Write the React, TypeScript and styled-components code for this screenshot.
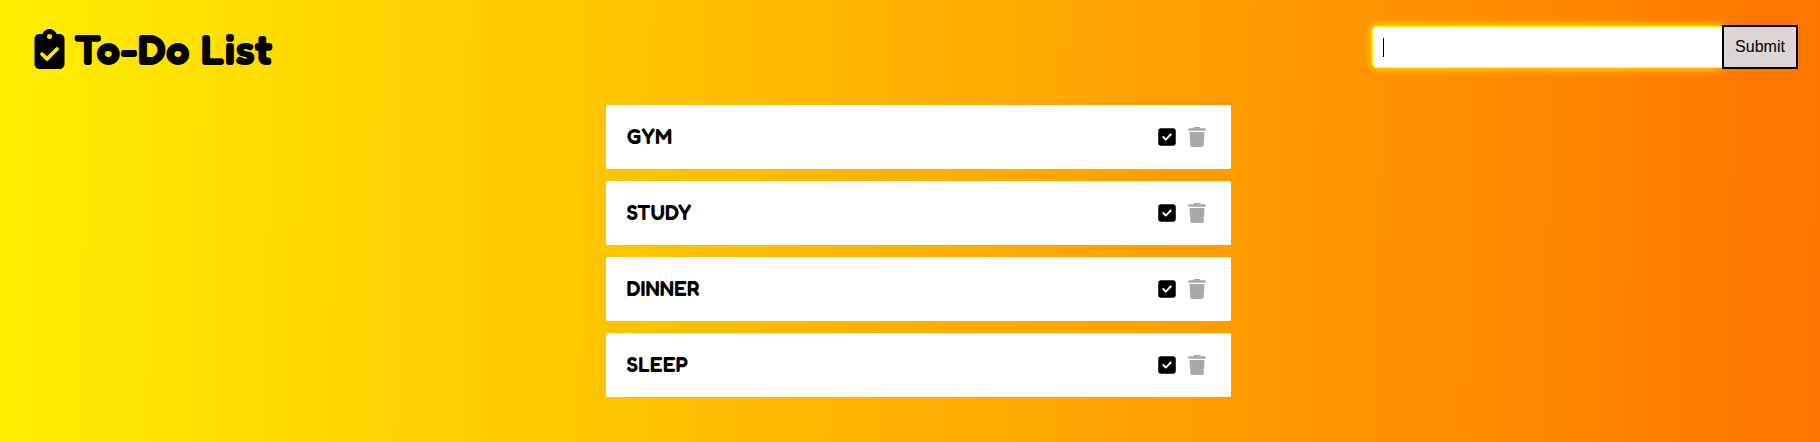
import React, { useState } from "react";
import styled, { createGlobalStyle } from "styled-components";
import { FaClipboardCheck, FaSquareCheck, FaTrash } from "react-icons/fa6";

const GlobalStyle = createGlobalStyle`
  * {
    box-sizing: border-box;
  }
  body {
    margin: 0;
    min-height: 100vh;
    background: linear-gradient(91deg, #ffee00, #ff7500);
    color: #000;
    font-family: "Fredoka One", Fredoka, Lato, "Liberation Sans", sans-serif;
  }
`;

const Header = styled.header`
  display: flex;
  align-items: flex-start;
  justify-content: space-between;
  padding: 25px 22px 28px 34px;
`;

const Title = styled.h1`
  display: flex;
  align-items: center;
  gap: 9px;
  margin: 0;
  font-size: 43px;
  line-height: 48px;
  font-weight: 900;

  svg {
    width: 31px;
    height: 40px;
  }
`;

const Form = styled.form`
  display: flex;
  align-items: center;
`;

const InputWrap = styled.div`
  position: relative;
  display: flex;
`;

const TaskInput = styled.input`
  width: 350px;
  height: 42px;
  padding: 0 10px;
  border: 1px solid #ffff00;
  border-right-width: 0;
  border-radius: 5px 0 0 5px;
  outline: none;
  background: #fff;
  box-shadow: 0 0 8px #ffff00;
  caret-color: transparent;
  font: 16px "Liberation Sans", Arial, sans-serif;
`;

const Caret = styled.span`
  position: absolute;
  top: 12px;
  left: 11px;
  width: 1px;
  height: 19px;
  background: #000;
  pointer-events: none;
`;

const SubmitButton = styled.button`
  position: relative;
  width: 76px;
  height: 44px;
  padding: 0;
  border: 2px solid #000;
  background: #dcd5d5;
  color: #000;
  font: 16px "Liberation Sans", Arial, sans-serif;
`;

const Main = styled.main`
  padding-left: 16px;
`;

const TaskList = styled.ul`
  display: flex;
  flex-direction: column;
  gap: 12px;
  width: 625px;
  max-width: 100%;
  margin: 4px auto 0;
  padding: 0;
  list-style: none;
`;

const Task = styled.li`
  display: flex;
  align-items: center;
  height: 64px;
  padding: 0 25px 0 21px;
  border-radius: 2px;
  background: #fff;
`;

const TaskName = styled.span`
  flex: 1;
  font-size: 21px;
  line-height: 24px;
  font-weight: 600;
`;

const IconButton = styled.button<{ $color: string }>`
  display: flex;
  margin-left: 12px;
  padding: 0;
  border: 0;
  background: none;
  color: ${({ $color }) => $color};

  svg {
    width: 18px;
    height: 20px;
  }
`;

const tasks = ["GYM", "STUDY", "DINNER", "SLEEP"];

export default function App() {
  const [value, setValue] = useState("");

  return (
    <>
      <GlobalStyle />
      <Header>
        <Title>
          <FaClipboardCheck aria-hidden />
          To-Do List
        </Title>
        <Form onSubmit={(event) => event.preventDefault()}>
          <InputWrap>
            <TaskInput
              aria-label="New task"
              autoFocus
              value={value}
              onChange={(event) => setValue(event.target.value)}
            />
            {value === "" && <Caret />}
          </InputWrap>
          <SubmitButton type="submit">Submit</SubmitButton>
        </Form>
      </Header>
      <Main>
        <TaskList>
          {tasks.map((task) => (
            <Task key={task}>
              <TaskName>{task}</TaskName>
              <IconButton $color="#000" type="button" aria-label={`Complete ${task}`}>
                <FaSquareCheck />
              </IconButton>
              <IconButton $color="#a9a9a9" type="button" aria-label={`Delete ${task}`}>
                <FaTrash />
              </IconButton>
            </Task>
          ))}
        </TaskList>
      </Main>
    </>
  );
}
